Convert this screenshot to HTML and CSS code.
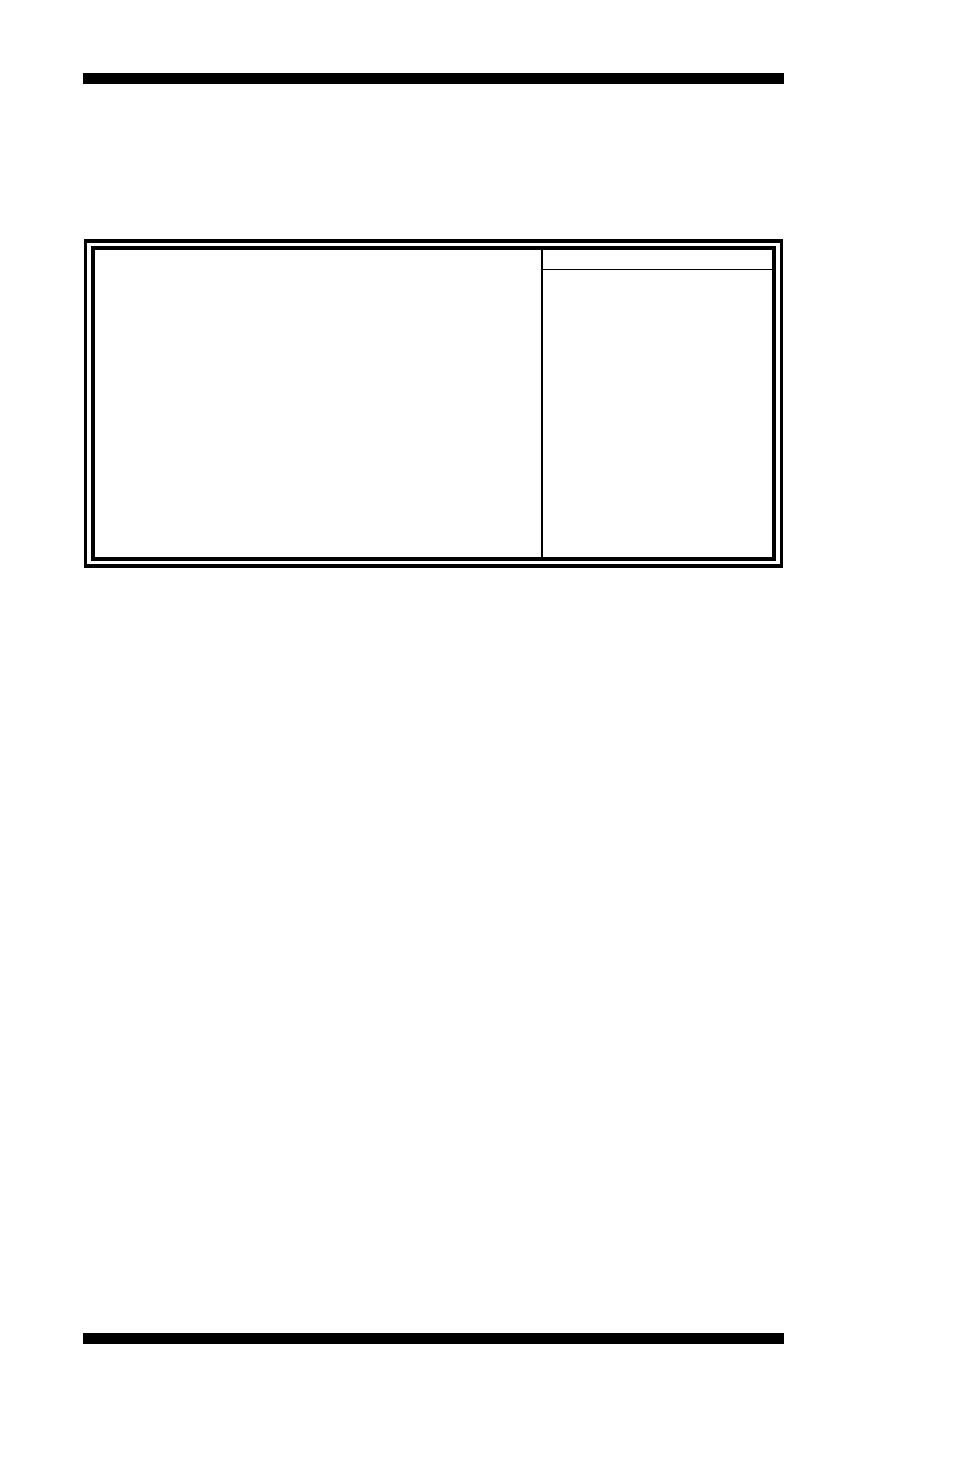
FILE: index.html
```
<!DOCTYPE html>
<html lang="en">
<head>
  <meta charset="UTF-8">
  <meta name="viewport" content="width=device-width, initial-scale=1">
  <title>Setup Screen</title>
  <link rel="stylesheet" href="styles.css">
</head>
<body>
  <div class="page">
    <header class="rule"></header>

    <main class="content">
      <div class="frame">
        <div class="screen">
          <section class="settings"></section>
          <aside class="help">
            <div class="help-title"></div>
            <div class="help-body"></div>
          </aside>
        </div>
      </div>
    </main>

    <footer class="rule"></footer>
  </div>
</body>
</html>
```
FILE: styles.css
```
:root {
  --ink: #000000;
  --paper: #ffffff;
}
* { box-sizing: border-box; }
body {
  margin: 0;
  background: var(--paper);
  color: var(--ink);
  font-family: "Liberation Serif", serif;
}
.page {
  display: flex;
  flex-direction: column;
  min-height: 100vh;
  padding: 73px 170px 131px 83px;
}
.rule {
  height: 11px;
  background: var(--ink);
}
.content {
  flex: 1;
  padding: 155px 1px 0;
}

/* double frame around the screen */
.frame {
  border: solid var(--ink);
  border-width: 4px 3px;
  padding: 3px 4px;
}
.screen {
  display: grid;
  grid-template-columns: 446fr 231fr;
  min-height: 315px;
  border: 4px solid var(--ink);
}
.help {
  border-left: 2px solid var(--ink);
}
.help-title {
  height: 20px;
  border-bottom: 1px solid var(--ink);
}
```
